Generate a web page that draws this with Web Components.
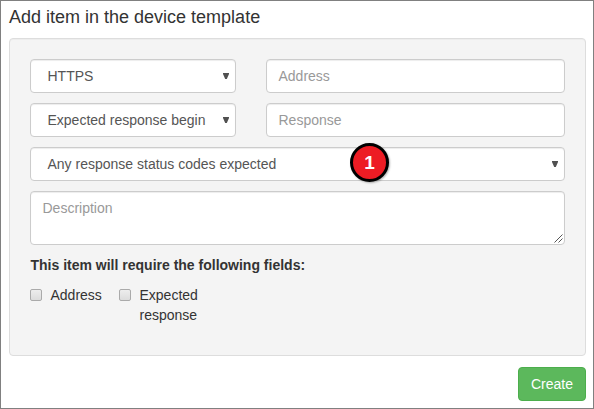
<!DOCTYPE html>
<html lang="en">
<head>
<meta charset="utf-8">
<title>Add item</title>
<style>
html, body { margin: 0; height: 100%; }
body { font: 14px/20px "Liberation Sans", Arial, sans-serif; color: #333; background: #fff; overflow: hidden; }
</style>
</head>
<body>
<template-dialog heading="Add item in the device template">
  <field-row>
    <select-field value="HTTPS"></select-field>
    <text-field hint="Address"></text-field>
  </field-row>
  <field-row>
    <select-field value="Expected response begin"></select-field>
    <text-field hint="Response"></text-field>
  </field-row>
  <select-field value="Any response status codes expected"><step-badge>1</step-badge></select-field>
  <text-field multiline hint="Description"></text-field>
  <required-fields heading="This item will require the following fields:">
    <check-option>Address</check-option>
    <check-option>Expected response</check-option>
  </required-fields>
  <action-button slot="actions">Create</action-button>
</template-dialog>
<script>
const define = (name, html, setup) => customElements.define(name, class extends HTMLElement {
  constructor() {
    super();
    this.attachShadow({ mode: "open" }).innerHTML = html;
  }
  connectedCallback() { if (setup) setup(this, this.shadowRoot); }
});
const box = `box-sizing: border-box; background: #fff; border: 1px solid #ccc; border-radius: 4px;
  box-shadow: inset 0 1px 1px rgba(0,0,0,.075);`;

define("template-dialog", `<style>
  :host { display: flex; flex-direction: column; box-sizing: border-box; height: 409px; width: 594px;
    border: 1px solid #808080; padding: 6px 7px 7px 8px; }
  h1 { margin: 0 0 11px; padding-top: 1px; font-size: 18px; line-height: 19px; font-weight: 400; white-space: nowrap; }
  section { box-sizing: border-box; height: 318px; background: #f4f4f4; border: 1px solid #ddd; border-radius: 4px;
    padding: 20px 20px 0; display: flex; flex-direction: column; gap: 10px; box-shadow: inset 0 1px 1px rgba(0,0,0,.03); }
  footer { display: flex; justify-content: flex-end; padding-top: 11px; }
  </style><h1></h1><section><slot></slot></section><footer><slot name="actions"></slot></footer>`,
  (el, root) => { root.querySelector("h1").textContent = el.getAttribute("heading"); });

define("field-row", `<style>
  :host { display: grid; grid-template-columns: 206px 1fr; gap: 30px; }
  </style><slot></slot>`);

define("select-field", `<style>
  :host { display: flex; align-items: center; justify-content: space-between; position: relative; height: 34px;
    ${box} padding: 0 6px 0 16.5px; color: #555; white-space: nowrap; }
  svg { display: block; }
  </style><span></span><svg width="6" height="7" viewBox="0 0 6 7"><path d="M0 0h6v1L3.8 6H2.2L0 1z" fill="#505050"/></svg><slot></slot>`,
  (el, root) => { root.querySelector("span").textContent = el.getAttribute("value"); });

define("text-field", `<style>
  :host { display: flex; justify-content: space-between; height: 34px; ${box} padding: 6px 11.5px; color: #999; }
  :host([multiline]) { height: 54px; padding-right: 1px; padding-bottom: 1px; }
  svg { display: none; align-self: flex-end; }
  :host([multiline]) svg { display: block; }
  </style><span></span><svg width="9" height="9" viewBox="0 0 9 9"><path d="M.5 8.5l8-8M4.5 8.5l4-4" stroke="#555" stroke-width="1" fill="none"/></svg>`,
  (el, root) => { root.querySelector("span").textContent = el.getAttribute("hint"); });

define("step-badge", `<style>
  :host { position: absolute; left: 319px; top: -5px; width: 39px; height: 39px; box-sizing: border-box;
    border: 3px solid #000; border-radius: 50%; background: #ed1c24; color: #fff; display: flex; align-items: center;
    justify-content: center; font-weight: 700; font-size: 19px; line-height: 20px; box-shadow: 1px 1px 2px rgba(0,0,0,.3); }
  </style><slot></slot>`);

define("required-fields", `<style>
  :host { display: block; }
  h2 { margin: 0 0 10px .5px; font-size: 14px; line-height: 20px; font-weight: 700; }
  div { display: grid; grid-template-columns: 89px 98px; align-items: start; }
  </style><h2></h2><div><slot></slot></div>`,
  (el, root) => { root.querySelector("h2").textContent = el.getAttribute("heading"); });

define("check-option", `<style>
  :host { display: flex; gap: 8.5px; }
  i { flex: none; box-sizing: border-box; width: 12px; height: 12px; margin-top: 4px; border: 1px solid #aaa;
    border-radius: 2px; background: linear-gradient(#ededed, #dcdcdc); }
  </style><i></i><span><slot></slot></span>`);

define("action-button", `<style>
  :host { box-sizing: border-box; width: 68px; height: 34px; padding: 6px 0; text-align: center; color: #fff;
    background: #5cb85c; border: 1px solid #4cae4c; border-radius: 4px; }
  </style><slot></slot>`);
</script>
</body>
</html>
